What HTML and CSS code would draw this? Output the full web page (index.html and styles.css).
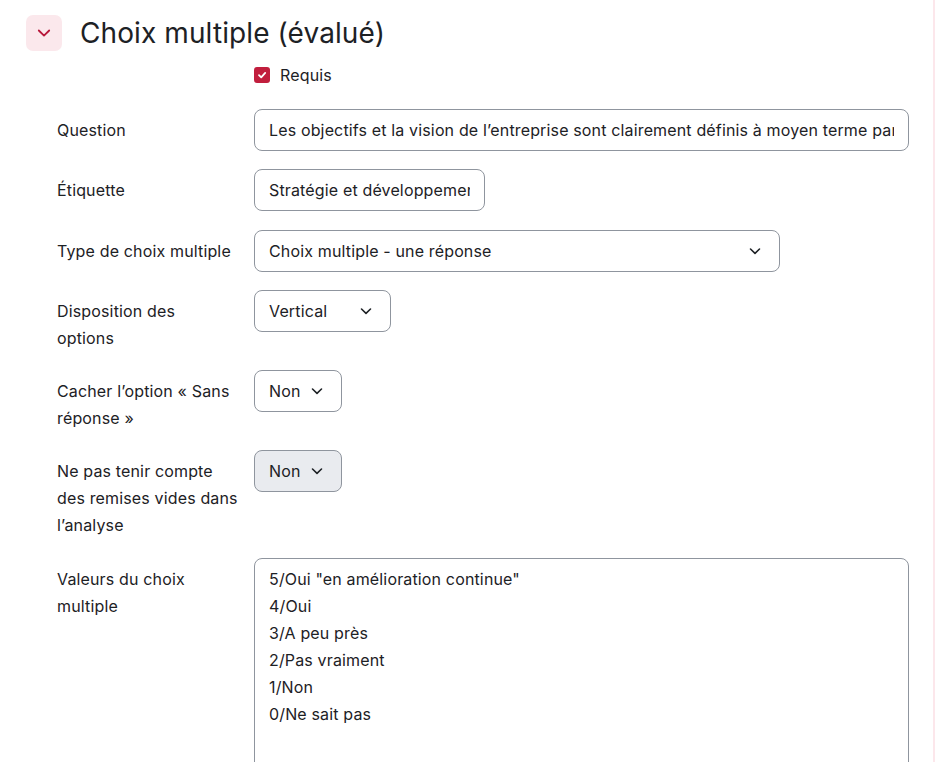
FILE: index.html
```html
<!DOCTYPE html>
<html lang="fr">
<head>
<meta charset="utf-8">
<title>Choix multiple (évalué)</title>
<link rel="stylesheet" href="styles.css">
</head>
<body>
<div class="page">
  <main class="content">
    <div class="header">
      <button class="toggle" type="button" aria-label="Réduire">
        <svg width="14" height="14" viewBox="0 0 14 14"><path d="M1.8 4.5 L7 9.6 L12.2 4.5" fill="none" stroke="#b8173a" stroke-width="1.8" stroke-linecap="round" stroke-linejoin="round"/></svg>
      </button>
      <h2 class="title">Choix multiple (évalué)</h2>
    </div>
    <div class="required">
      <span class="checkbox">
        <svg width="10" height="10" viewBox="0 0 10 10"><path d="M2 5.2 L4.2 7.3 L8.2 2.9" fill="none" stroke="#fff" stroke-width="1.8" stroke-linecap="round" stroke-linejoin="round"/></svg>
      </span>
      <span class="req-label">Requis</span>
    </div>

    <div class="form">
      <div class="row">
        <div class="label">Question</div>
        <div class="field"><div class="input input-wide"><div class="clip">Les objectifs et la vision de l’entreprise sont clairement définis à moyen terme par</div></div></div>
      </div>
      <div class="row">
        <div class="label">Étiquette</div>
        <div class="field"><div class="input input-short"><div class="clip">Stratégie et développement</div></div></div>
      </div>
      <div class="row">
        <div class="label">Type de choix multiple</div>
        <div class="field">
          <div class="select select-type"><span>Choix multiple - une réponse</span>
            <svg class="chev" width="14" height="14" viewBox="0 0 14 14"><path d="M2.5 5 L7 9.3 L11.5 5" fill="none" stroke="#1d2125" stroke-width="1.6" stroke-linecap="round" stroke-linejoin="round"/></svg>
          </div>
        </div>
      </div>
      <div class="row">
        <div class="label">Disposition des<br>options</div>
        <div class="field">
          <div class="select select-vert"><span>Vertical</span>
            <svg class="chev" width="14" height="14" viewBox="0 0 14 14"><path d="M2.5 5 L7 9.3 L11.5 5" fill="none" stroke="#1d2125" stroke-width="1.6" stroke-linecap="round" stroke-linejoin="round"/></svg>
          </div>
        </div>
      </div>
      <div class="row">
        <div class="label">Cacher l’option « Sans<br>réponse »</div>
        <div class="field">
          <div class="select select-non"><span>Non</span>
            <svg class="chev" width="14" height="14" viewBox="0 0 14 14"><path d="M2.5 5 L7 9.3 L11.5 5" fill="none" stroke="#1d2125" stroke-width="1.6" stroke-linecap="round" stroke-linejoin="round"/></svg>
          </div>
        </div>
      </div>
      <div class="row">
        <div class="label">Ne pas tenir compte<br>des remises vides dans<br>l’analyse</div>
        <div class="field">
          <div class="select select-non disabled"><span>Non</span>
            <svg class="chev" width="14" height="14" viewBox="0 0 14 14"><path d="M2.5 5 L7 9.3 L11.5 5" fill="none" stroke="#1d2125" stroke-width="1.6" stroke-linecap="round" stroke-linejoin="round"/></svg>
          </div>
        </div>
      </div>
      <div class="row">
        <div class="label">Valeurs du choix<br>multiple</div>
        <div class="field">
          <div class="textarea">
            <div>5/Oui "en amélioration continue"</div>
            <div>4/Oui</div>
            <div>3/A peu près</div>
            <div>2/Pas vraiment</div>
            <div>1/Non</div>
            <div>0/Ne sait pas</div>
          </div>
        </div>
      </div>
    </div>
  </main>
  <div class="edge"></div>
</div>
</body>
</html>
```

FILE: styles.css
```css
html, body {
  margin: 0;
  padding: 0;
  height: 762px;
  overflow: hidden;
  background: #ffffff;
}

body {
  font-family: "Inter", "Roboto", "Liberation Sans", sans-serif;
  font-size: 16px;
  letter-spacing: 0.15px;
  color: #1d2125;
}

.page {
  display: flex;
  height: 762px;
}

.content {
  flex: 1;
  padding: 15px 0 0 26px;
}

.edge {
  width: 2px;
  background: #fce7eb;
}

.header {
  display: flex;
  align-items: center;
  gap: 18px;
}

.toggle {
  width: 36px;
  height: 36px;
  border: none;
  border-radius: 7px;
  background: #fbe8ec;
  display: flex;
  align-items: center;
  justify-content: center;
  padding: 0;
}

.title {
  margin: 0;
  font-size: 28px;
  font-weight: 400;
  letter-spacing: 0.1px;
  color: #1d2125;
  line-height: 36px;
}

.required {
  display: flex;
  align-items: center;
  gap: 10px;
  margin: 6px 0 0 228px;
  height: 36px;
}

.checkbox {
  width: 16px;
  height: 16px;
  border-radius: 3px;
  background: #c11e3d;
  display: flex;
  align-items: center;
  justify-content: center;
}

.req-label {
  font-size: 16px;
}

.form {
  display: flex;
  flex-direction: column;
  gap: 18.3px;
  margin-top: 16px;
}

.row {
  display: flex;
  align-items: flex-start;
}

.label {
  width: 197px;
  padding-left: 31px;
  padding-top: 8px;
  line-height: 27px;
  flex-shrink: 0;
  white-space: nowrap;
}

.field {
  flex: 1;
}

.input,
.select,
.textarea {
  box-sizing: border-box;
  border: 1px solid #8f959e;
  border-radius: 8px;
  background: #fff;
  font-size: 16px;
  color: #1d2125;
}

.input {
  height: 42px;
  padding: 0 14px;
  line-height: 40px;
}

.clip {
  white-space: nowrap;
  overflow: hidden;
}

.input-wide {
  width: 655px;
}

.input-short {
  width: 231px;
}

.select {
  height: 42px;
  padding: 0 17px 0 14px;
  display: flex;
  align-items: center;
  justify-content: space-between;
}

.select-type {
  width: 526px;
}

.select-vert {
  width: 137px;
}

.select-non {
  width: 88px;
}

.select.disabled {
  background: #e9ebef;
}

.chev {
  flex-shrink: 0;
}

.textarea {
  width: 655px;
  height: 240px;
  padding: 7px 14px;
  line-height: 27px;
}
```
